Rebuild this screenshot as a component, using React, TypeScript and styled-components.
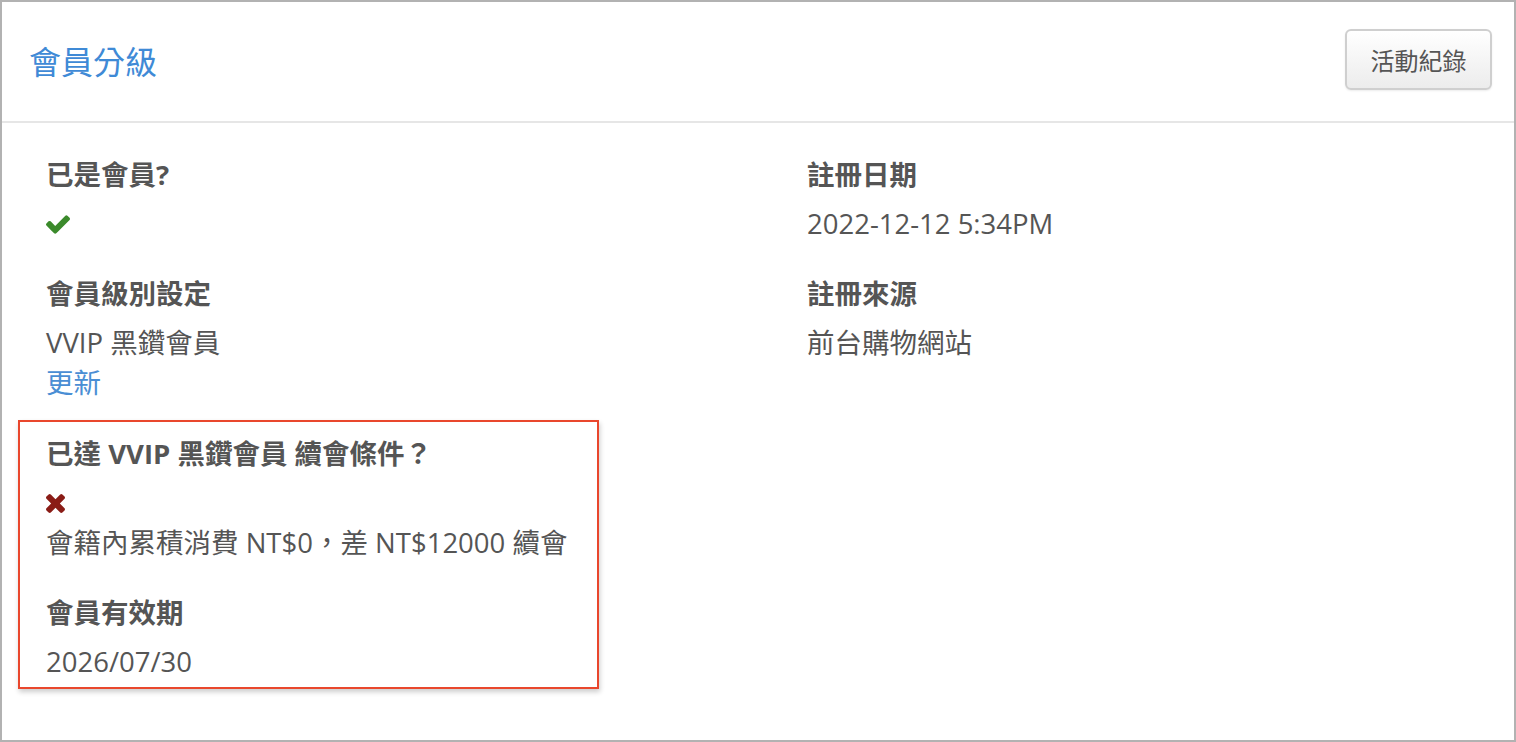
import * as React from 'react';
import styled, { createGlobalStyle } from 'styled-components';

const GlobalStyle = createGlobalStyle`
  html, body {
    margin: 0;
    padding: 0;
    background: #fff;
  }
  body {
    font-family: 'Open Sans', 'Noto Sans CJK TC', sans-serif;
    color: #555;
  }
  * {
    box-sizing: border-box;
  }
`;

function CheckIcon() {
  return (
    <svg width="24" height="19" viewBox="121 334 1550 1188">
      <path
        fill="#3b8a2b"
        d="M1671 566q0 40-28 68l-724 724-136 136q-28 28-68 28t-68-28l-136-136-362-362q-28-28-28-68t28-68l136-136q28-28 68-28t68 28l294 295 656-657q28-28 68-28t68 28l136 136q28 28 28 68z"
      />
    </svg>
  );
}

function TimesIcon() {
  return (
    <svg width="19" height="19" viewBox="302 366 1188 1188">
      <path
        fill="#8a1c16"
        d="M1490 1322q0 40-28 68l-136 136q-28 28-68 28t-68-28l-294-294-294 294q-28 28-68 28t-68-28l-136-136q-28-28-28-68t28-68l294-294-294-294q-28-28-28-68t28-68l136-136q28-28 68-28t68 28l294 294 294-294q28-28 68-28t68 28l136 136q28 28 28 68t-28 68l-294 294 294 294q28 28 28 68z"
      />
    </svg>
  );
}

function App() {
  return (
    <>
      <GlobalStyle />
      <Panel>
        <Header>
          <Title>會員分級</Title>
          <HeaderButton>活動紀錄</HeaderButton>
        </Header>
        <Body>
          <Column>
            <Field>
              <Label>已是會員?</Label>
              <IconLine>
                <CheckIcon />
              </IconLine>
            </Field>
            <Field>
              <Label>會員級別設定</Label>
              <Value>VVIP 黑鑽會員</Value>
              <Link href="#">更新</Link>
            </Field>
            <Highlight>
              <Field>
                <Label>已達 VVIP 黑鑽會員 續會條件？</Label>
                <IconLine>
                  <TimesIcon />
                </IconLine>
                <Value>會籍內累積消費 NT$0，差 NT$12000 續會</Value>
              </Field>
              <Field $last>
                <Label>會員有效期</Label>
                <Value>2026/07/30</Value>
              </Field>
            </Highlight>
          </Column>
          <Column>
            <Field>
              <Label>註冊日期</Label>
              <Value>2022-12-12 5:34PM</Value>
            </Field>
            <Field>
              <Label>註冊來源</Label>
              <Value>前台購物網站</Value>
            </Field>
          </Column>
        </Body>
      </Panel>
    </>
  );
}

const Panel = styled.div`
  width: 1516px;
  height: 742px;
  border: 2px solid #b2b2b2;
  background: #fff;
  display: flex;
  flex-direction: column;
`;

const Header = styled.div`
  height: 121px;
  flex-shrink: 0;
  display: flex;
  align-items: center;
  justify-content: space-between;
  padding: 0 22px 0 27px;
  border-bottom: 2px solid #e6e6e6;
`;

const Title = styled.h2`
  margin: 0;
  font-size: 32px;
  font-weight: 400;
  line-height: 44px;
  color: #3f8ad6;
`;

const HeaderButton = styled.button`
  width: 147px;
  height: 61px;
  margin-top: -5px;
  border: 2px solid #cfcfcf;
  border-radius: 6px;
  background: linear-gradient(#ffffff, #ececec);
  box-shadow: 0 1px 2px rgba(0, 0, 0, 0.08);
  font-family: 'Open Sans', 'Noto Sans CJK TC', sans-serif;
  font-size: 24px;
  color: #555;
  cursor: pointer;
`;

const Body = styled.div`
  display: grid;
  grid-template-columns: 761px 1fr;
  padding: 32px 0 0 44px;
`;

const Column = styled.div`
  display: flex;
  flex-direction: column;
  align-items: flex-start;
`;

const Field = styled.div<{ $last?: boolean }>`
  display: flex;
  flex-direction: column;
  margin-bottom: ${(p) => (p.$last ? '0' : '30px')};
`;

const Label = styled.div`
  font-size: 27.5px;
  font-weight: 700;
  line-height: 40px;
  margin-bottom: 9px;
  color: #555;
  white-space: nowrap;
`;

const Value = styled.div`
  font-size: 27.5px;
  line-height: 40px;
  color: #555;
  white-space: nowrap;
`;

const IconLine = styled.div`
  height: 40px;
  display: flex;
  align-items: center;
`;

const Link = styled.a`
  font-size: 27.5px;
  line-height: 40px;
  color: #4a8ed4;
  text-decoration: none;
`;

const Highlight = styled.div`
  margin: -13px 0 0 -28px;
  padding: 12px 30px 5px 26px;
  border: 2px solid #e9472d;
  box-shadow: 1px 3px 5px rgba(0, 0, 0, 0.2);
`;

export default App;
